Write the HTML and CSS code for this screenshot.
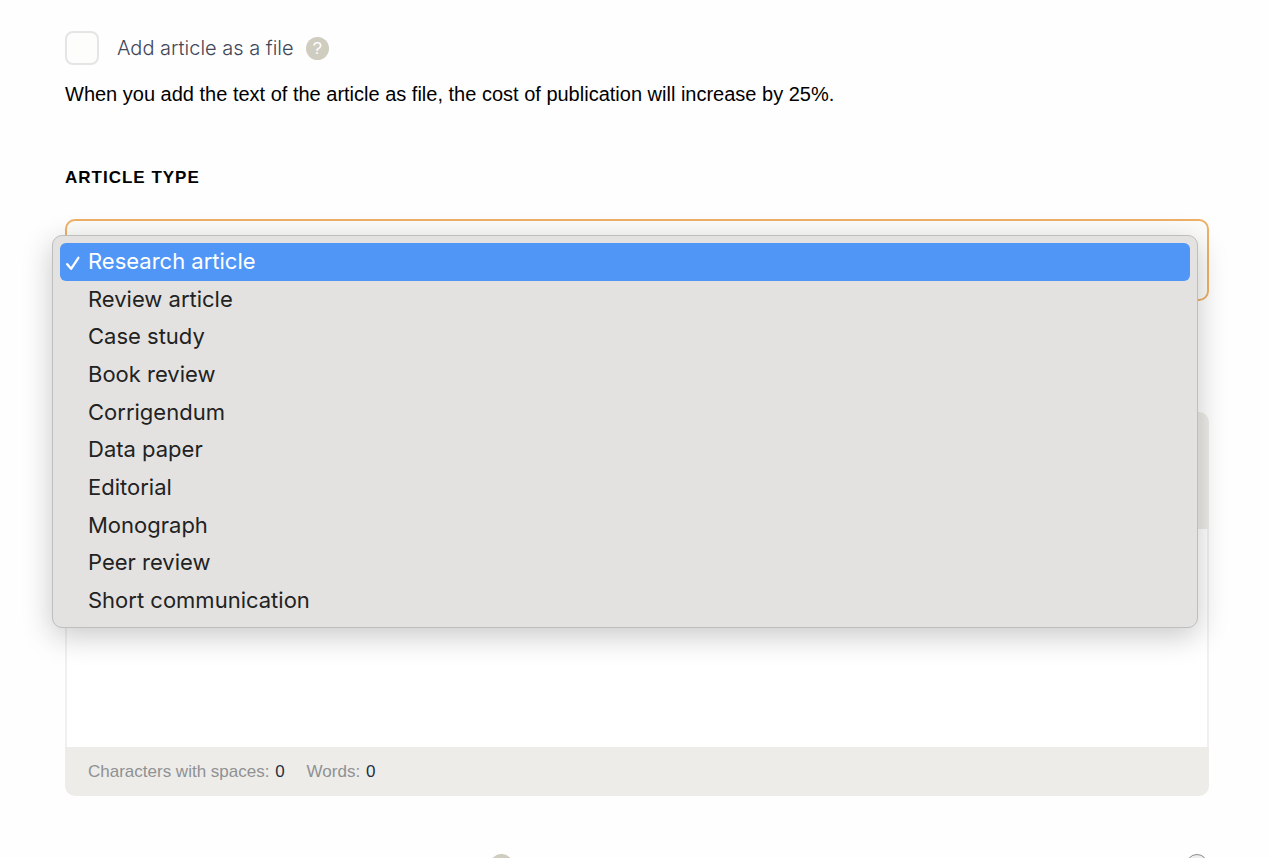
FILE: index.html
```html
<!DOCTYPE html>
<html lang="en">
<head>
    <meta charset="UTF-8">
    <meta name="viewport" content="width=device-width, initial-scale=1.0">
    <title>Submit article</title>
    <link rel="stylesheet" href="styles.css">
</head>
<body>
    <form class="article-form">
        <div class="file-option">
            <input type="checkbox" id="as-file" class="file-checkbox">
            <label for="as-file">Add article as a file</label>
            <button type="button" class="help" aria-label="Help">?</button>
        </div>
        <p class="file-note">When you add the text of the article as file, the cost of publication will increase by 25%.</p>

        <label class="field-title" for="article-type">Article type</label>
        <div class="type-field">
            <select id="article-type" class="type-select">
                <option value="research" label=" "></option>
            </select>
            <ul class="type-menu" role="listbox" aria-label="Article type">
                <li class="type-option selected" role="option" aria-selected="true">
                    <svg class="check" viewBox="0 0 16 16" aria-hidden="true"><path d="M2.2 9.2 L6.1 13.8 L13.4 2.8"/></svg>
                    Research article
                </li>
                <li class="type-option" role="option">Review article</li>
                <li class="type-option" role="option">Case study</li>
                <li class="type-option" role="option">Book review</li>
                <li class="type-option" role="option">Corrigendum</li>
                <li class="type-option" role="option">Data paper</li>
                <li class="type-option" role="option">Editorial</li>
                <li class="type-option" role="option">Monograph</li>
                <li class="type-option" role="option">Peer review</li>
                <li class="type-option" role="option">Short communication</li>
            </ul>
        </div>

        <div class="editor">
            <div class="editor-toolbar"></div>
            <textarea class="editor-text" aria-label="Article text"></textarea>
            <div class="editor-footer">
                <span>Characters with spaces: <b>0</b></span>
                <span>Words: <b>0</b></span>
            </div>
        </div>

        <div class="next-row">
            <button type="button" class="help" aria-label="Help"></button>
            <input type="radio" class="round-toggle" aria-label="Toggle section">
        </div>
    </form>
</body>
</html>
```
FILE: styles.css
```css
* {
    box-sizing: border-box;
}

body {
    margin: 0;
    height: 100vh;
    overflow: hidden;
    background: #fefefe;
    color: #000;
    font-family: "Liberation Sans", Arial, sans-serif;
    font-size: 20px;
}

.article-form {
    padding: 31px 61px 0 65px;
}

.file-option {
    display: flex;
    align-items: center;
    height: 34px;
    color: #3f4759;
    font-family: Inter, sans-serif;
    font-weight: 300;
}

.file-checkbox {
    appearance: none;
    width: 34px;
    height: 34px;
    margin: 0 18px 0 0;
    border: 2px solid #e5e5e5;
    border-radius: 8px;
    background: #fdfdfb;
}

.help {
    width: 23px;
    height: 23px;
    margin-left: 12px;
    padding: 0;
    border: none;
    border-radius: 50%;
    background: #cfccc0;
    color: #fff;
    font: 17px/23px "Liberation Sans", Arial, sans-serif;
}

.file-note {
    margin: 15px 0 57px;
    line-height: 28px;
}

.field-title {
    display: block;
    margin-bottom: 28px;
    font-size: 17px;
    font-weight: bold;
    line-height: 26px;
    letter-spacing: 1px;
    text-transform: uppercase;
}

.type-field {
    position: relative;
    height: 82px;
    margin-bottom: 111px;
}

.type-select {
    appearance: none;
    display: block;
    width: 100%;
    height: 100%;
    border: 2px solid #efb066;
    border-radius: 10px;
    background: #fcfcfa;
}

/* opened list, lies over the field and the editor */
.type-menu {
    position: absolute;
    top: 16px;
    left: -13px;
    right: 11px;
    display: grid;
    grid-auto-rows: 1fr;
    height: 393px;
    margin: 0;
    padding: 7px;
    list-style: none;
    border: 1px solid #bebebe;
    border-radius: 10px;
    background: #e3e2e1;
    box-shadow: 0 8px 30px rgba(0, 0, 0, 0.22);
    color: #222;
    font-family: Inter, sans-serif;
    font-size: 22px;
}

.type-option {
    position: relative;
    display: flex;
    align-items: center;
    padding: 0 0 2px 28px;
    border-radius: 6px;
}

.type-option.selected {
    background: #5096f7;
    color: #fff;
}

.check {
    position: absolute;
    left: 5px;
    top: 12px;
    width: 16px;
    height: 16px;
    fill: none;
    stroke: #fff;
    stroke-width: 2.3;
    stroke-linecap: round;
    stroke-linejoin: round;
}

.editor {
    overflow: hidden;
    border-radius: 10px;
}

.editor-toolbar {
    height: 117px;
    background: #ecebe7;
}

.editor-text {
    display: block;
    width: 100%;
    height: 218px;
    border: 2px solid #f0f0ee;
    border-width: 0 2px;
    background: #fff;
    resize: none;
}

.editor-footer {
    display: flex;
    align-items: center;
    gap: 22px;
    height: 49px;
    padding: 0 23px;
    background: #edece9;
    color: #8f9192;
    font-size: 17px;
}

.editor-footer b {
    margin-left: 1px;
    color: #252f3f;
    font-weight: normal;
}

.next-row {
    display: flex;
    justify-content: space-between;
    margin-top: 58px;
    padding: 0 1px 0 413px;
}

.round-toggle {
    appearance: none;
    width: 22px;
    height: 22px;
    margin: 0;
    border: 1px solid #8c8c8c;
    border-radius: 50%;
    background: #eee;
}
```
